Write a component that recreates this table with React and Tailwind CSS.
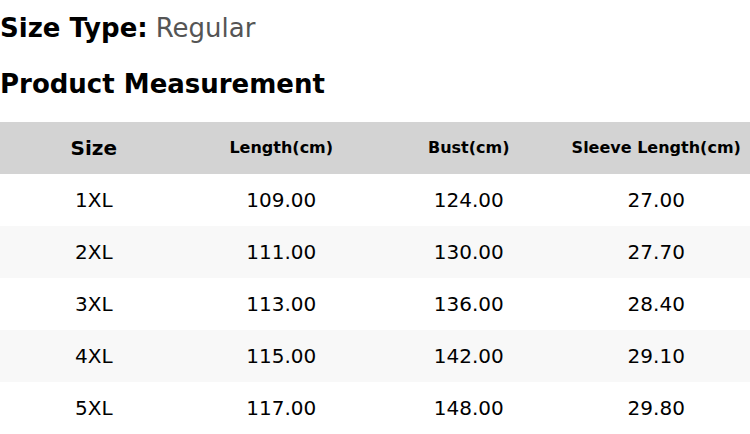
const rows = [
  ["1XL", "109.00", "124.00", "27.00"],
  ["2XL", "111.00", "130.00", "27.70"],
  ["3XL", "113.00", "136.00", "28.40"],
  ["4XL", "115.00", "142.00", "29.10"],
  ["5XL", "117.00", "148.00", "29.80"],
];

export default function App() {
  return (
    <div className="w-[750px] h-[434px] overflow-hidden bg-white text-black font-['DejaVu_Sans',sans-serif]">
      {/* Size type */}
      <div className="h-[56px] flex items-center text-[26px]">
        <span className="font-bold">Size Type:</span>
        <span className="ml-2 text-[#555555]">Regular</span>
      </div>

      <div className="h-[56px] flex items-center text-[26px] font-bold">
        Product Measurement
      </div>

      {/* Measurement table */}
      <div className="mt-[10px]">
        <div className="grid grid-cols-4 h-[52px] bg-[#d3d3d3] font-bold items-center text-center">
          <div className="text-[20px]">Size</div>
          <div className="text-[16px]">Length(cm)</div>
          <div className="text-[16px]">Bust(cm)</div>
          <div className="text-[16px]">Sleeve Length(cm)</div>
        </div>
        {rows.map((row, i) => (
          <div
            key={row[0]}
            className={`grid grid-cols-4 h-[52px] items-center text-center text-[20px] ${
              i % 2 === 1 ? "bg-[#f8f8f8]" : "bg-white"
            }`}
          >
            {row.map((cell, j) => (
              <div key={j}>{cell}</div>
            ))}
          </div>
        ))}
      </div>
    </div>
  );
}
